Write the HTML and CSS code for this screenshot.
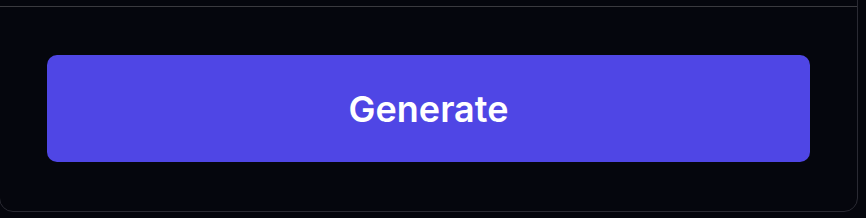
FILE: index.html
```html
<!DOCTYPE html>
<html>

<head>
	<title>Generate</title>
	<link rel="stylesheet" href="styles.css">
</head>

<body>
	<div class="panel">
		<div class="panel-body"></div>
		<div class="panel-footer">
			<button type="button" class="generate-btn">Generate</button>
		</div>
	</div>
</body>

</html>
```

FILE: styles.css
```css
body {
	font-family: Inter, "Noto Sans", sans-serif;
	background-color: #05060d;
	color: #fff;
	margin: 0;
	padding: 0;
	overflow: hidden;
}

.panel {
	width: 857px;
	margin-left: -1px;
	margin-top: -30px;
	border: 1px solid #2a2a33;
	border-radius: 14px;
	background-color: #05060d;
}

.panel-body {
	height: 35px;
}

.panel-footer {
	border-top: 1px solid #3a3a3f;
	padding: 48px 47px 49px 47px;
}

.generate-btn {
	display: block;
	width: 100%;
	height: 107px;
	border: none;
	border-radius: 10px;
	background-color: #4f46e5;
	color: #fff;
	font-family: Inter, "Noto Sans", sans-serif;
	font-size: 36px;
	font-weight: 600;
	cursor: pointer;
}
```
